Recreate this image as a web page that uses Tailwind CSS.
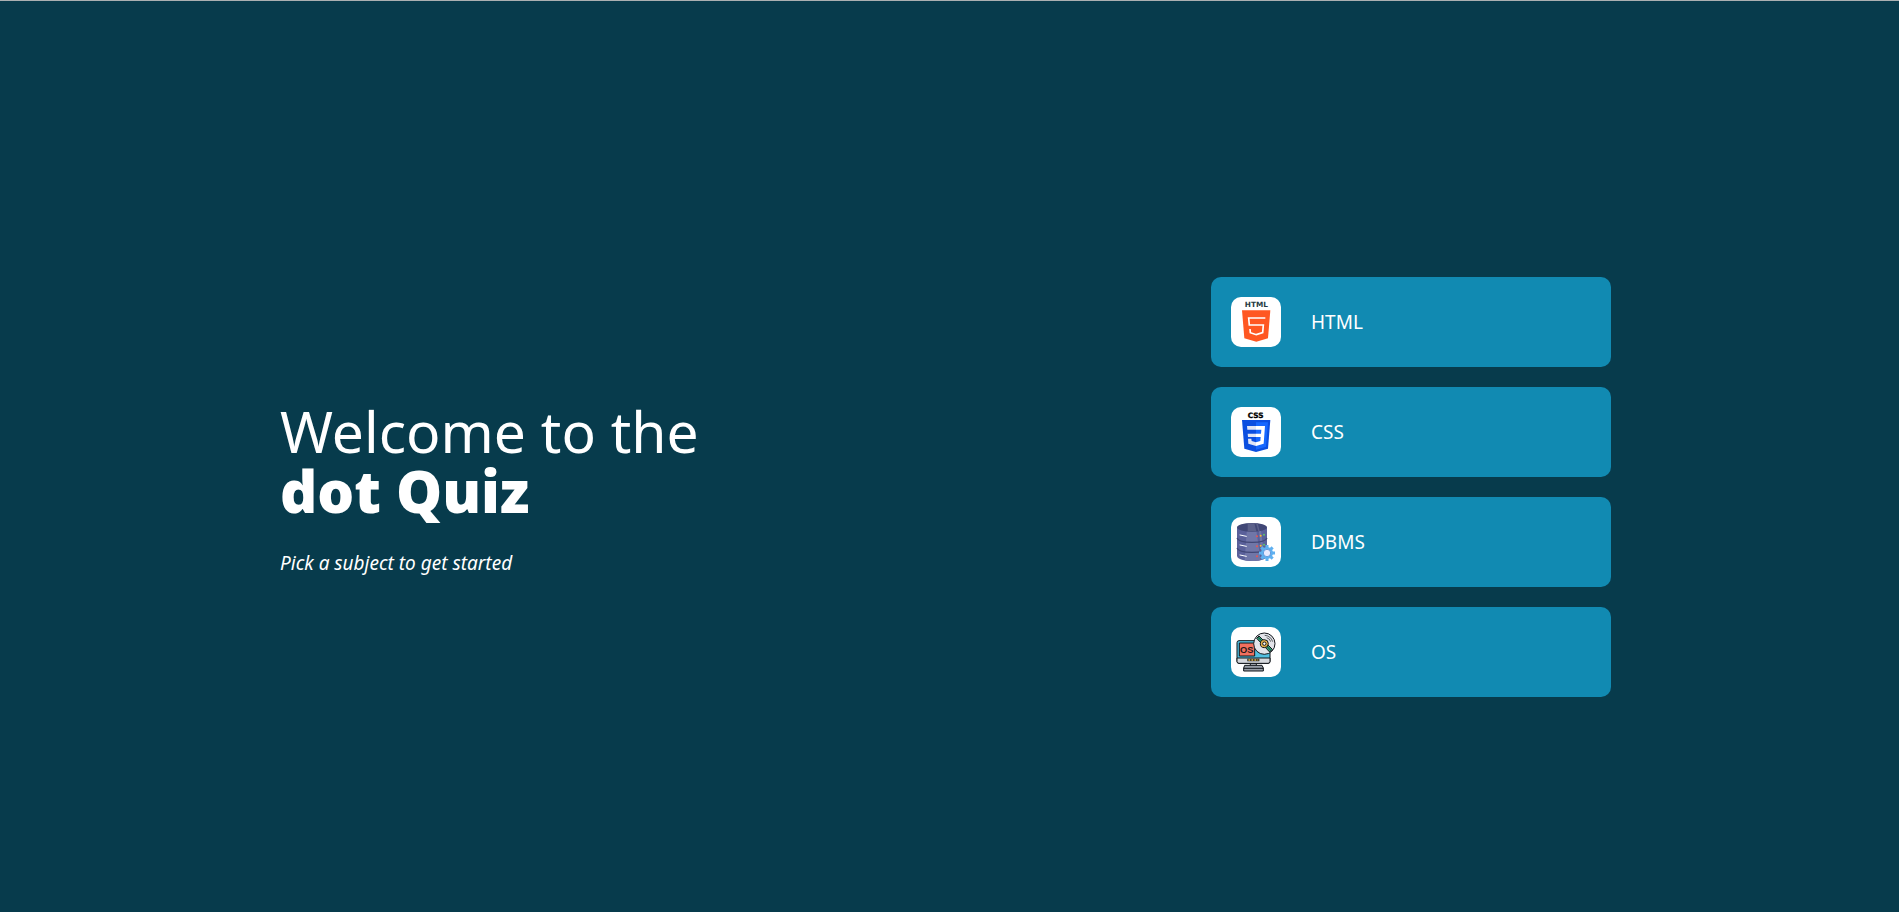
<!DOCTYPE html>
<html lang="en">
<head>
<meta charset="utf-8">
<title>dot Quiz</title>
<script src="https://cdn.jsdelivr.net/npm/@tailwindcss/browser@4"></script>
</head>
<body class="min-h-screen flex flex-col bg-[#073b4c] border-t border-[#abb0b2] text-white font-['Noto_Sans',sans-serif]">
<main class="flex-1 flex items-center justify-between pl-70 pr-72 pt-15">
  <section class="flex flex-col gap-7 pt-1">
    <h1 class="text-[57px] leading-[60px] font-normal">Welcome to the<br><span class="text-[58px] font-black">dot Quiz</span></h1>
    <p class="text-[19px] leading-7 italic">Pick a subject to get started</p>
  </section>
  <nav class="flex flex-col gap-5 w-100" aria-label="Subjects">
    <button type="button" class="flex items-center gap-[30px] p-5 rounded-[10px] bg-[#118ab2] text-[19px] leading-7 text-left">
      <svg class="size-[50px] rounded-[10px] bg-white" viewBox="0 0 150 150" aria-hidden="true">
        <text x="76" y="30" text-anchor="middle" font-family="DejaVu Sans" font-weight="bold" font-size="22" fill="#263a42">HTML</text>
        <path d="M33 40h85l-7 84-35 10-36-10z" fill="#ff5722"/>
        <path d="M103 63H53l2 21h42l-2 23-19 6-18-6-1-11" fill="none" stroke="#fff" stroke-width="5"/>
      </svg>
      <span>HTML</span>
    </button>
    <button type="button" class="flex items-center gap-[30px] p-5 rounded-[10px] bg-[#118ab2] text-[19px] leading-7 text-left">
      <svg class="size-[50px] rounded-[10px] bg-white" viewBox="0 0 150 150" aria-hidden="true">
        <text x="74" y="32" text-anchor="middle" font-family="DejaVu Sans" font-weight="bold" font-size="22" fill="#000" stroke="#000">CSS</text>
        <path d="M33 39h85l-7 86-36 10-35-10z" fill="#0b4fe0"/>
        <path d="M75 46h36l-6 73-30 9z" fill="#1668ff"/>
        <path d="M75 57H48l1 11h26zM75 80H50l1 10h24zM75 106l-13-4-1-7H51l1 15 23 7z" fill="#dfe5f5"/>
        <path d="M75 57h27l-4 53-23 7v-11l13-4 1-12H75V80h15l1-12H75z" fill="#fff"/>
      </svg>
      <span>CSS</span>
    </button>
    <button type="button" class="flex items-center gap-[30px] p-5 rounded-[10px] bg-[#118ab2] text-[19px] leading-7 text-left">
      <svg class="size-[50px] rounded-[10px] bg-white" viewBox="0 0 150 150" aria-hidden="true">
        <path d="M18 31v86c2 10 22 15 45 15s43-5 45-15V31z" fill="#5a609a"/>
        <path d="M48 34h27l14 96c-8 2-17 2-26 2-8 0-16-1-22-2z" fill="#7076a8"/>
        <path d="M83 34h6l12 91-8 4z" fill="#7076a8"/>
        <ellipse cx="63" cy="31" rx="45" ry="13" fill="#414776"/>
        <path d="M50 19h20l6 24H50z" fill="#5c618a"/>
        <path d="M75 19h5l6 23-4 1z" fill="#5c618a"/>
        <path d="M18 63c3 9 22 13 45 13s42-4 45-13M18 93c3 9 22 13 45 13s42-4 45-13" fill="none" stroke="#414776" stroke-width="4"/>
        <path d="M27 54l19 4M27 84l19 4M27 114l19 4" stroke="#fff" stroke-width="3" stroke-linecap="round"/>
        <g fill="#ef5350"><circle cx="78" cy="58" r="3"/><circle cx="78" cy="88" r="3"/><circle cx="78" cy="118" r="3"/></g>
        <g fill="#ffb82e"><circle cx="89" cy="56" r="3"/><circle cx="89" cy="86" r="3"/></g>
        <g fill="#5cc46b"><circle cx="99" cy="53" r="3"/><circle cx="99" cy="83" r="3"/></g>
        <g stroke="#5fb0f0" stroke-width="9"><path d="M108 84v48M84 108h48M91 91l34 34M125 91l-34 34"/></g>
        <circle cx="108" cy="108" r="18" fill="#5fb0f0"/>
        <circle cx="108" cy="108" r="11" fill="#e8eaff" stroke="#3c7fd0" stroke-width="2"/>
      </svg>
      <span>DBMS</span>
    </button>
    <button type="button" class="flex items-center gap-[30px] p-5 rounded-[10px] bg-[#118ab2] text-[19px] leading-7 text-left">
      <svg class="size-[50px] rounded-[10px] bg-white" viewBox="0 0 150 150" aria-hidden="true">
        <g stroke="#11161b" stroke-width="3" stroke-linejoin="round">
          <path d="M58 108h18v10H58z" fill="#b8bcc4"/>
          <path d="M41 115h52l4 8v9H38v-9z" fill="#969ca5"/>
          <path d="M38 124h59" fill="none"/>
          <rect x="18" y="41" width="99" height="68" rx="6" fill="#50bfe0"/>
          <path d="M18 93h99v10q0 6-6 6H24q-6 0-6-6z" fill="#d5d8dd"/>
          <rect x="25" y="48" width="46" height="39" fill="#f2705f"/>
        </g>
        <text x="47" y="78" text-anchor="middle" font-family="Liberation Sans" font-weight="bold" font-size="28" fill="#251717">OS</text>
        <g stroke="#11161b" stroke-width="3" stroke-linejoin="round">
          <circle cx="100" cy="50" r="32" fill="#e3e4ea"/>
          <path d="M77 34l7-7 40 40-8 8z" fill="#2fa77c"/>
          <path d="M81 31l14 13M107 57l13 14" fill="none" stroke-width="2"/>
          <circle cx="100" cy="50" r="12" fill="#e4b04a"/>
          <circle cx="100" cy="50" r="5" fill="#fff"/>
          <path d="M101 25q18 1 24 19M107 32q10 3 12 12" fill="none" stroke-width="2"/>
        </g>
        <path d="M49 99h36" stroke="#151a20" stroke-width="7"/>
        <path d="M52 99h30" stroke="#f4c352" stroke-width="4" stroke-dasharray="6 3"/>
      </svg>
      <span>OS</span>
    </button>
  </nav>
</main>
</body>
</html>
